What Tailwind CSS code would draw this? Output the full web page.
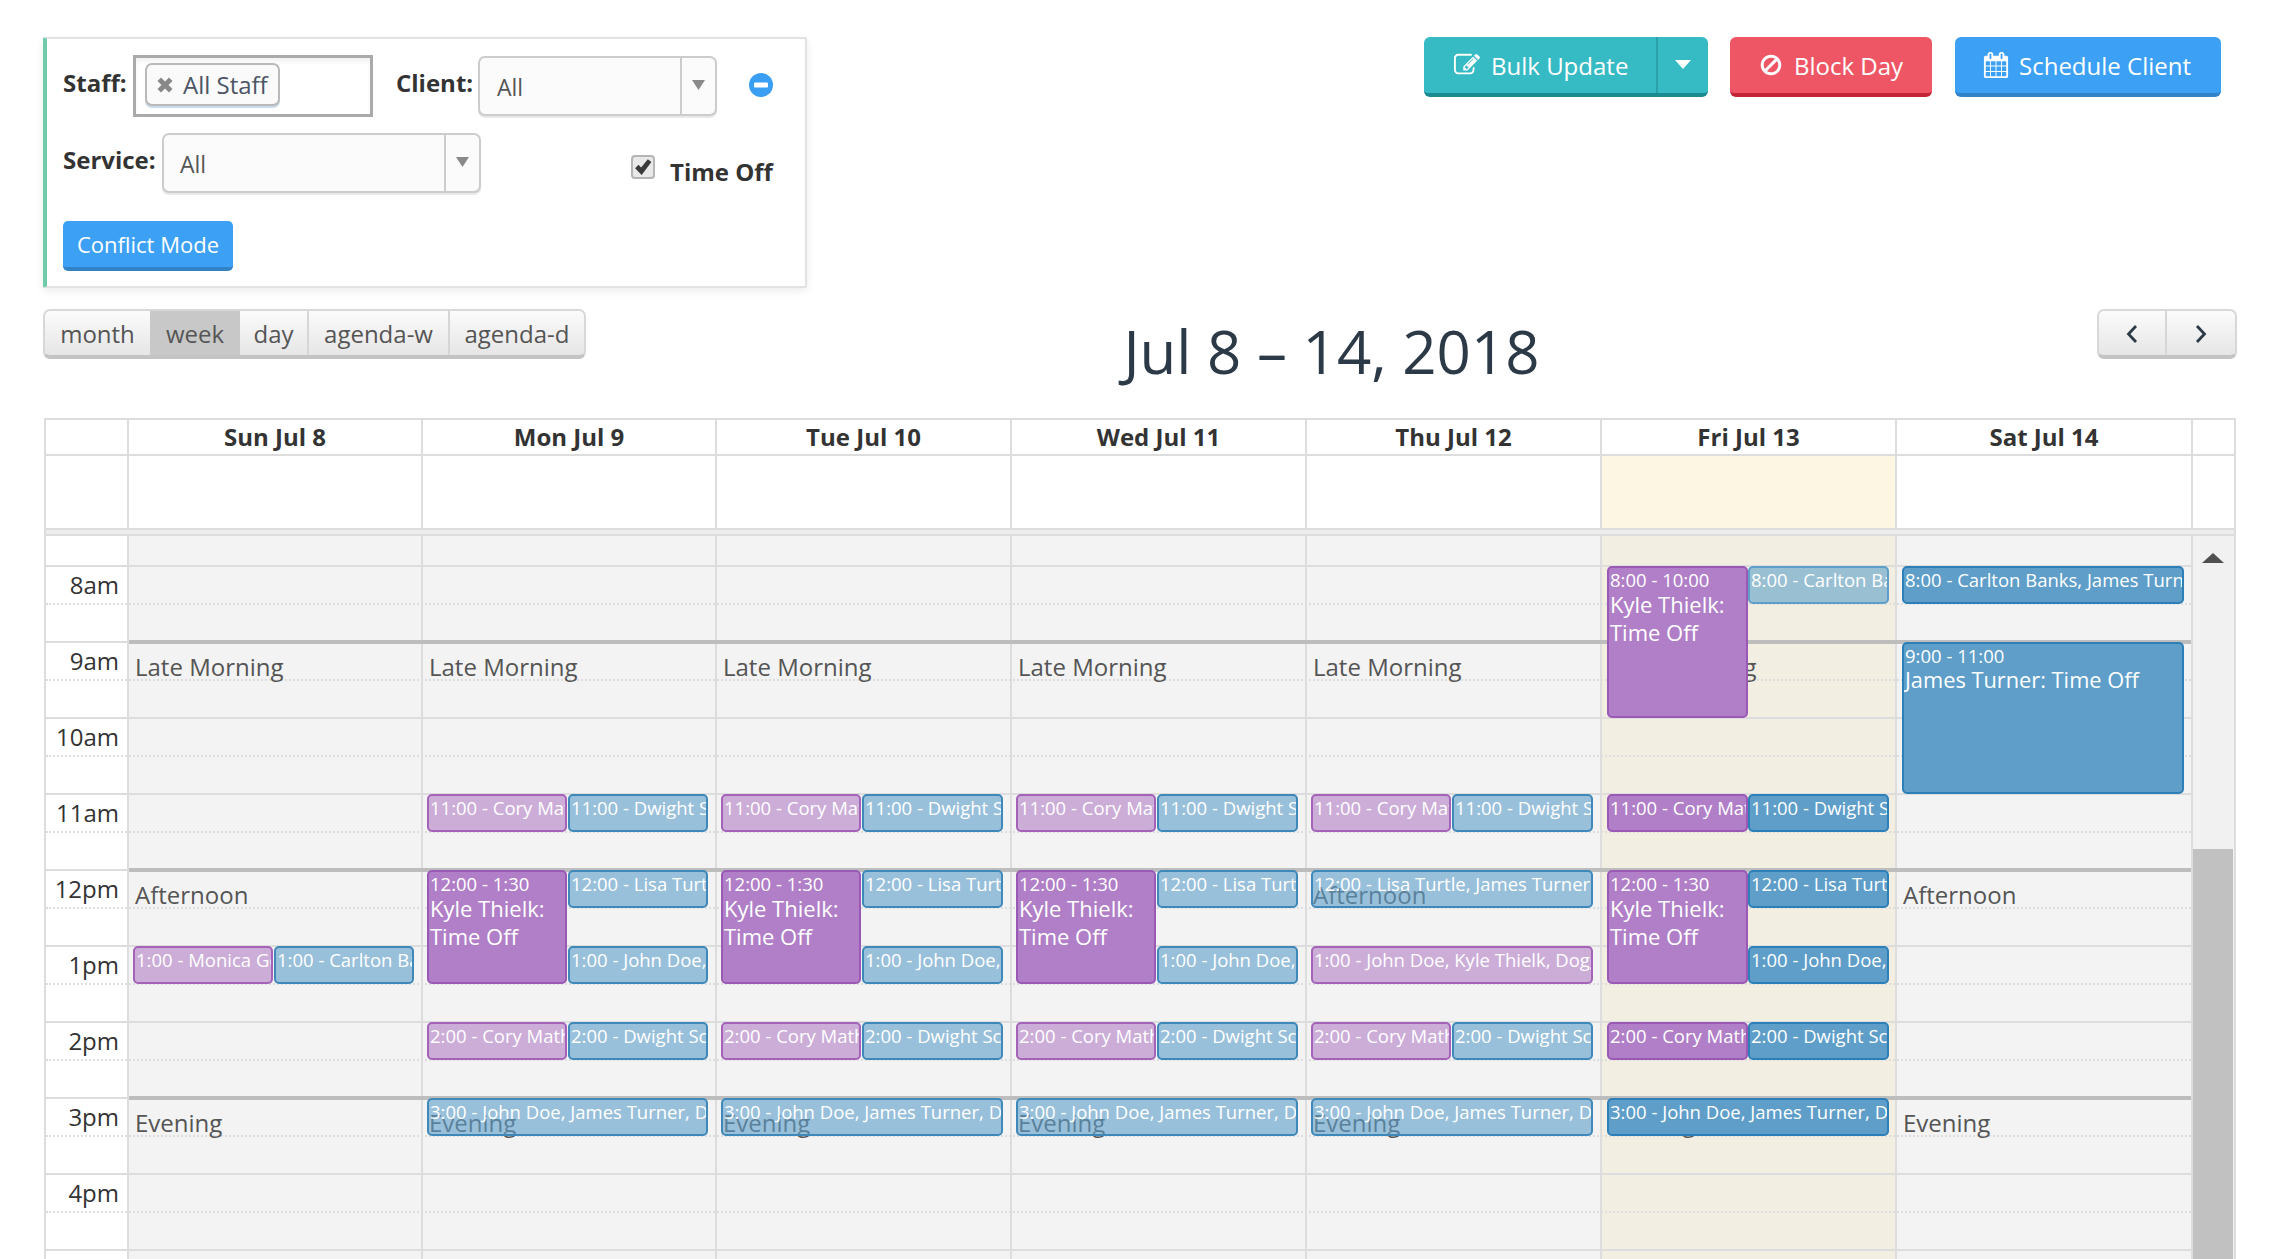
<!DOCTYPE html>
<html lang="en">
<head>
<meta charset="utf-8">
<title>Calendar</title>
<script src="https://cdn.jsdelivr.net/npm/@tailwindcss/browser@4"></script>
</head>
<body class="h-[1259px] w-[2271px] overflow-hidden bg-white font-['Open_Sans',sans-serif] text-[#333]">

<div class="flex items-start justify-between pl-[43px] pr-[50px] pt-[37px]">
  <div class="h-[251px] w-[764px] rounded-[2px] border-2 border-l-4 border-[#e2e2e2] border-l-[#6fcba8] bg-white pl-[16px] pt-[16px] shadow-[0_3px_8px_rgba(0,0,0,0.08)]">
    <div class="flex items-start">
      <span class="mt-[10px] w-[70px] text-[24px] leading-[36px] font-bold">Staff:</span>
      <div class="flex h-[62px] w-[240px] items-start border-[3px] border-[#aaa] bg-white pl-[9px] pt-[5px] shadow-[inset_0_4px_4px_rgba(0,0,0,0.05)]">
        <div class="flex h-[43px] w-[135px] items-center rounded-[7px] border-2 border-[#b9b9b9] bg-[#fafafa] pl-[10px] shadow-[0_2px_0_#c9dbe8]">
          <svg class="mr-[10px] h-[16px] w-[16px]" viewBox="0 0 16 16"><path d="M4 0.500 8 4.500 12 0.500 15.500 4 11.500 8 15.500 12 12 15.500 8 11.500 4 15.500 0.500 12 4.500 8 0.500 4Z" fill="#888"/></svg>
          <span class="text-[24px] leading-[30px] text-[#4b5565]">All Staff</span>
        </div>
      </div>
      <span class="ml-[23px] mt-[10px] w-[82px] text-[24px] leading-[36px] font-bold">Client:</span>
      <div class="mt-[1px] flex h-[60px] w-[239px] rounded-[7px] border-2 border-[#ccc] bg-[#fbfbfb] shadow-[0_2px_0_#e8e8e8]">
        <span class="flex-1 pl-[17px] pt-[11px] text-[23px] leading-[36px] text-[#555]">All</span>
        <span class="flex w-[35px] justify-center border-l-2 border-[#ccc] pt-[22px]">
          <svg class="h-[10px] w-[13px]" viewBox="0 0 13 10"><path d="M0 0H13L6.500 10Z" fill="#8a8a8a"/></svg>
        </span>
      </div>
      <svg class="ml-[32px] mt-[18px] h-[24px] w-[24px]" viewBox="0 0 24 24"><circle cx="12" cy="12" r="12" fill="#3a9ff2"/><rect x="5" y="9.500" width="14" height="5" rx="1" fill="#fff"/></svg>
    </div>
    <div class="mt-[16px] flex items-start">
      <span class="mt-[9px] w-[99px] text-[24px] leading-[36px] font-bold">Service:</span>
      <div class="flex h-[60px] w-[319px] rounded-[7px] border-2 border-[#ccc] bg-[#fbfbfb] shadow-[0_2px_0_#e8e8e8]">
        <span class="flex-1 pl-[16px] pt-[11px] text-[23px] leading-[36px] text-[#555]">All</span>
        <span class="flex w-[35px] justify-center border-l-2 border-[#ccc] pt-[22px]">
          <svg class="h-[10px] w-[13px]" viewBox="0 0 13 10"><path d="M0 0H13L6.500 10Z" fill="#8a8a8a"/></svg>
        </span>
      </div>
      <div class="ml-[150px] mt-[22px] flex h-[24px] w-[24px] items-center justify-center rounded-[4px] border-2 border-[#b5b5b5] bg-[#e9e9e9]">
        <svg class="h-[18px] w-[18px]" viewBox="0 0 16 16"><path d="M1 9 4 6 6.300 8.500 12.300 1 15.500 3.500 6.800 15Z" fill="#3a3a3a"/></svg>
      </div>
      <span class="ml-[15px] mt-[21px] text-[24px] leading-[36px] font-bold">Time Off</span>
    </div>
    <button class="mt-[28px] block h-[50px] w-[170px] rounded-[5px] border-b-4 border-[#3283c5] bg-[#3ca1f5] text-[22px] leading-[46px] text-white">Conflict Mode</button>
  </div>

  <div class="flex gap-[22px]">
    <div class="flex h-[60px] w-[284px] rounded-[6px] border-b-4 border-[#1b8b92] bg-[#36bac4] text-white">
      <div class="flex w-[232px] items-center pl-[30px]">
        <svg class="mr-[11px] h-[26px] w-[26px]" viewBox="0 0 1792 1792"><path fill="#fff" d="M888 1184l116-116-152-152-116 116v56h96v96h56zm440-720q-16-16-33 1l-350 350q-17 17-1 33t33-1l350-350q17-17 1-33zm80 594v190q0 119-84.500 203.500t-203.500 84.500h-832q-119 0-203.500-84.500t-84.500-203.500v-832q0-119 84.500-203.500t203.500-84.500h832q63 0 117 25 15 7 18 23 3 17-9 29l-49 49q-14 14-32 8-23-6-45-6h-832q-66 0-113 47t-47 113v832q0 66 47 113t113 47h832q66 0 113-47t47-113v-126q0-13 9-22l64-64q15-15 35-7t20 29zm-96-738l288 288-672 672h-288v-288zm444 132l-92 92-288-288 92-92q28-28 68-28t68 28l152 152q28 28 28 68t-28 68z"/></svg>
        <span class="mt-[2px] text-[24px] leading-[30px]">Bulk Update</span>
      </div>
      <div class="flex flex-1 items-center justify-center border-l-2 border-[#2aa0a9]">
        <svg class="mb-[2px] h-[9px] w-[16px]" viewBox="0 0 16 9"><path d="M0 0H16L8 9Z" fill="#fff"/></svg>
      </div>
    </div>
    <div class="flex h-[60px] w-[202px] items-center rounded-[6px] border-b-4 border-[#c42436] bg-[#ef5665] pl-[29px] text-white">
      <svg class="mr-[11px] h-[24px] w-[24px]" viewBox="0 0 1792 1792"><path fill="#fff" d="M1440 893q0-161-87-295l-754 753q137 89 297 89 111 0 211.500-43.500t173.500-116.500 116-174.500 43-212.500zm-999 299l755-754q-135-91-300-91-148 0-273 73t-198 199-73 274q0 162 89 299zm1223-299q0 157-61 300t-163.500 246-245 164-298.500 61-298.500-61-245-164-163.500-246-61-300 61-299.500 163.500-245.500 245-164 298.500-61 298.500 61 245 164 163.500 245.500 61 299.500z"/></svg>
      <span class="mt-[2px] text-[24px] leading-[30px]">Block Day</span>
    </div>
    <div class="ml-[1px] flex h-[60px] w-[266px] items-center rounded-[6px] border-b-4 border-[#3283c5] bg-[#3ca1f5] pl-[28px] text-white">
      <svg class="mr-[10px] h-[26px] w-[26px]" viewBox="0 0 1792 1792"><path fill="#fff" d="M192 1664h288v-288h-288v288zm352 0h320v-288h-320v288zm-352-352h288v-320h-288v320zm352 0h320v-320h-320v320zm-352-384h288v-288h-288v288zm736 736h320v-288h-320v288zm-384-736h320v-288h-320v288zm768 736h288v-288h-288v288zm-384-352h320v-320h-320v320zm-352-864v-288q0-13-9.500-22.500t-22.500-9.500h-64q-13 0-22.500 9.500t-9.500 22.500v288q0 13 9.500 22.500t22.500 9.500h64q13 0 22.500-9.500t9.500-22.500zm736 864h288v-320h-288v320zm-384-384h320v-288h-320v288zm384 0h288v-288h-288v288zm32-480v-288q0-13-9.500-22.500t-22.500-9.500h-64q-13 0-22.500 9.500t-9.500 22.500v288q0 13 9.500 22.500t22.500 9.500h64q13 0 22.500-9.500t9.500-22.500zm384-64v1280q0 52-38 90t-90 38h-1408q-52 0-90-38t-38-90v-1280q0-52 38-90t90-38h128v-96q0-66 47-113t113-47h64q66 0 113 47t47 113v96h384v-96q0-66 47-113t113-47h64q66 0 113 47t47 113v96h128q52 0 90 38t38 90z"/></svg>
      <span class="mt-[2px] text-[24px] leading-[30px]">Schedule Client</span>
    </div>
  </div>
</div>

<div class="mt-[21px] flex h-[109px] items-start pl-[43px] pr-[34px]">
  <div class="flex h-[50px] w-[543px] overflow-hidden rounded-[7px] border-2 border-b-4 border-[#d8d8d8] border-b-[#c4c4c4] bg-gradient-to-b from-[#fbfbfb] to-[#e6e6e6] text-[24px] leading-[46px] text-[#555]">
    <span class="w-[105px] text-center">month</span>
    <span class="w-[90px] bg-[#c8c8c8] text-center">week</span>
    <span class="w-[69px] border-r-2 border-[#d6d6d6] text-center">day</span>
    <span class="w-[141px] border-r-2 border-[#d6d6d6] text-center">agenda-w</span>
    <span class="flex-1 text-center">agenda-d</span>
  </div>
  <h2 class="mt-[10px] flex-1 pr-[20px] text-center text-[60px] leading-[64px] font-normal text-[#2c3a47]">Jul 8 – 14, 2018</h2>
  <div class="flex h-[50px] w-[140px] rounded-[7px] border-2 border-b-4 border-[#d8d8d8] border-b-[#c4c4c4] bg-gradient-to-b from-[#fbfbfb] to-[#e6e6e6]">
    <span class="flex w-[68px] items-center justify-center border-r-2 border-[#d6d6d6] pt-[1px]">
      <svg class="h-[20px] w-[14px]" viewBox="0 0 14 20"><path d="M11 2 3.500 10 11 18" fill="none" stroke="#2c3a47" stroke-width="2.800"/></svg>
    </span>
    <span class="flex flex-1 items-center justify-center pt-[1px]">
      <svg class="h-[20px] w-[14px]" viewBox="0 0 14 20"><path d="M3 2 10.500 10 3 18" fill="none" stroke="#2c3a47" stroke-width="2.800"/></svg>
    </span>
  </div>
</div>

<div class="ml-[44px] w-[2192px] border-x-2 border-t-2 border-[#ddd]">
  <div class="grid h-[36px] grid-cols-[81px_294px_294px_295px_295px_295px_295px_296px_43px] border-b-2 border-[#ddd] text-center text-[24px] leading-[34px] font-bold text-[#333]">
    <div></div>
    <div class="border-l-2 border-[#ddd]">Sun Jul 8</div>
    <div class="border-l-2 border-[#ddd]">Mon Jul 9</div>
    <div class="border-l-2 border-[#ddd]">Tue Jul 10</div>
    <div class="border-l-2 border-[#ddd]">Wed Jul 11</div>
    <div class="border-l-2 border-[#ddd]">Thu Jul 12</div>
    <div class="border-l-2 border-[#ddd]">Fri Jul 13</div>
    <div class="border-l-2 border-[#ddd]">Sat Jul 14</div>
    <div class="border-l-2 border-[#ddd]"></div>
  </div>
  <div class="grid h-[74px] grid-cols-[81px_294px_294px_295px_295px_295px_295px_296px_43px] border-b-2 border-[#ddd]">
    <div></div>
    <div class="border-l-2 border-[#ddd]"></div>
    <div class="border-l-2 border-[#ddd]"></div>
    <div class="border-l-2 border-[#ddd]"></div>
    <div class="border-l-2 border-[#ddd]"></div>
    <div class="border-l-2 border-[#ddd]"></div>
    <div class="border-l-2 border-[#ddd] bg-[#fdf6e3]"></div>
    <div class="border-l-2 border-[#ddd]"></div>
    <div class="border-l-2 border-[#ddd]"></div>
  </div>
  <div class="h-[6px] border-b-2 border-[#ddd] bg-[#ededed]"></div>

  <div class="relative h-[723px] overflow-hidden">
    <div class="absolute inset-0 grid grid-cols-[81px_294px_294px_295px_295px_295px_295px_296px_43px]">
      <div class="bg-white"></div>
      <div class="border-l-2 border-[#ddd] bg-[#f3f3f3]"></div>
      <div class="border-l-2 border-[#ddd] bg-[#f3f3f3]"></div>
      <div class="border-l-2 border-[#ddd] bg-[#f3f3f3]"></div>
      <div class="border-l-2 border-[#ddd] bg-[#f3f3f3]"></div>
      <div class="border-l-2 border-[#ddd] bg-[#f3f3f3]"></div>
      <div class="border-l-2 border-[#ddd] bg-[#f2efe2]"></div>
      <div class="border-l-2 border-[#ddd] bg-[#f3f3f3]"></div>
      <div class="border-l-2 border-[#ddd] bg-[#f1f1f1]">
        <svg class="ml-[9px] mt-[17px] h-[10px] w-[22px]" viewBox="0 0 22 10"><path d="M11 0 22 10H0Z" fill="#505050"/></svg>
        <div class="ml-[0px] mt-[286px] h-[500px] w-[40px] bg-[#c1c1c1]"></div>
      </div>
    </div>

    <div class="relative w-[2145px] text-right text-[24px] leading-[36px] text-[#333]">
      <div class="h-[29px]"></div>
      <div class="h-[38px] border-t-2 border-[#ddd]"><div class="w-[73px]">8am</div></div>
      <div class="h-[38px] border-t-2 border-dotted border-[#ddd]"></div>
      <div class="h-[38px] border-t-2 border-[#ddd]"><div class="w-[73px]">9am</div></div>
      <div class="h-[38px] border-t-2 border-dotted border-[#ddd]"></div>
      <div class="h-[38px] border-t-2 border-[#ddd]"><div class="w-[73px]">10am</div></div>
      <div class="h-[38px] border-t-2 border-dotted border-[#ddd]"></div>
      <div class="h-[38px] border-t-2 border-[#ddd]"><div class="w-[73px]">11am</div></div>
      <div class="h-[38px] border-t-2 border-dotted border-[#ddd]"></div>
      <div class="h-[38px] border-t-2 border-[#ddd]"><div class="w-[73px]">12pm</div></div>
      <div class="h-[38px] border-t-2 border-dotted border-[#ddd]"></div>
      <div class="h-[38px] border-t-2 border-[#ddd]"><div class="w-[73px]">1pm</div></div>
      <div class="h-[38px] border-t-2 border-dotted border-[#ddd]"></div>
      <div class="h-[38px] border-t-2 border-[#ddd]"><div class="w-[73px]">2pm</div></div>
      <div class="h-[38px] border-t-2 border-dotted border-[#ddd]"></div>
      <div class="h-[38px] border-t-2 border-[#ddd]"><div class="w-[73px]">3pm</div></div>
      <div class="h-[38px] border-t-2 border-dotted border-[#ddd]"></div>
      <div class="h-[38px] border-t-2 border-[#ddd]"><div class="w-[73px]">4pm</div></div>
      <div class="h-[38px] border-t-2 border-dotted border-[#ddd]"></div>
      <div class="h-[38px] border-t-2 border-[#ddd]"></div>
    </div>

    <div class="absolute left-[83px] top-[104px] h-[4px] w-[2062px] bg-[#bdbdbd]"></div>
    <div class="absolute left-[83px] top-[332px] h-[4px] w-[2062px] bg-[#bdbdbd]"></div>
    <div class="absolute left-[83px] top-[560px] h-[4px] w-[2062px] bg-[#bdbdbd]"></div>

    <div class="absolute inset-0 grid grid-cols-[81px_294px_294px_295px_295px_295px_295px_296px_43px] text-[18.5px] leading-[22px] text-white">
      <div></div>

      <!-- Sun -->
      <div class="relative border-l-2 border-transparent">
        <span class="absolute left-[6px] top-[115px] text-[24px] leading-[32px] text-[#555]">Late Morning</span>
        <span class="absolute left-[6px] top-[343px] text-[24px] leading-[32px] text-[#555]">Afternoon</span>
        <span class="absolute left-[6px] top-[571px] text-[24px] leading-[32px] text-[#555]">Evening</span>
        <div class="absolute left-[4px] top-[410px] h-[38px] w-[140px] overflow-hidden whitespace-nowrap rounded-[5px] border-2 border-[#a463b8] bg-[#b07fc7]/60 px-[1px] pt-[1px]">1:00 - Monica Geller</div>
        <div class="absolute left-[145px] top-[410px] h-[38px] w-[140px] overflow-hidden whitespace-nowrap rounded-[5px] border-2 border-[#3f88ba] bg-[#5e9ec9]/60 px-[1px] pt-[1px]">1:00 - Carlton Banks</div>
      </div>

      <!-- Mon -->
      <div class="relative border-l-2 border-transparent">
        <span class="absolute left-[6px] top-[115px] text-[24px] leading-[32px] text-[#555]">Late Morning</span>
        <span class="absolute left-[6px] top-[343px] text-[24px] leading-[32px] text-[#555]">Afternoon</span>
        <span class="absolute left-[6px] top-[571px] text-[24px] leading-[32px] text-[#555]">Evening</span>
        <div class="absolute left-[4px] top-[258px] h-[38px] w-[140px] overflow-hidden whitespace-nowrap rounded-[5px] border-2 border-[#a463b8] bg-[#b07fc7]/60 px-[1px] pt-[1px]">11:00 - Cory Mathews</div>
        <div class="absolute left-[145px] top-[258px] h-[38px] w-[140px] overflow-hidden whitespace-nowrap rounded-[5px] border-2 border-[#3f88ba] bg-[#5e9ec9]/60 px-[1px] pt-[1px]">11:00 - Dwight Schrute</div>
        <div class="absolute left-[4px] top-[334px] h-[114px] w-[140px] overflow-hidden rounded-[5px] border-2 border-[#9b59b6] bg-[#b07fc7] px-[1px] pt-[1px]"><div>12:00 - 1:30</div><div class="-mt-[1px] text-[22px] leading-[28px]">Kyle Thielk: Time Off</div></div>
        <div class="absolute left-[145px] top-[334px] h-[38px] w-[140px] overflow-hidden whitespace-nowrap rounded-[5px] border-2 border-[#3f88ba] bg-[#5e9ec9]/60 px-[1px] pt-[1px]">12:00 - Lisa Turtle</div>
        <div class="absolute left-[145px] top-[410px] h-[38px] w-[140px] overflow-hidden whitespace-nowrap rounded-[5px] border-2 border-[#3f88ba] bg-[#5e9ec9]/60 px-[1px] pt-[1px]">1:00 - John Doe, James</div>
        <div class="absolute left-[4px] top-[486px] h-[38px] w-[140px] overflow-hidden whitespace-nowrap rounded-[5px] border-2 border-[#a463b8] bg-[#b07fc7]/60 px-[1px] pt-[1px]">2:00 - Cory Mathews</div>
        <div class="absolute left-[145px] top-[486px] h-[38px] w-[140px] overflow-hidden whitespace-nowrap rounded-[5px] border-2 border-[#3f88ba] bg-[#5e9ec9]/60 px-[1px] pt-[1px]">2:00 - Dwight Schrute</div>
        <div class="absolute left-[4px] top-[562px] h-[38px] w-[281px] overflow-hidden whitespace-nowrap rounded-[5px] border-2 border-[#3f88ba] bg-[#5e9ec9]/60 px-[1px] pt-[1px]">3:00 - John Doe, James Turner, Dwight Schrute</div>
      </div>

      <!-- Tue -->
      <div class="relative border-l-2 border-transparent">
        <span class="absolute left-[6px] top-[115px] text-[24px] leading-[32px] text-[#555]">Late Morning</span>
        <span class="absolute left-[6px] top-[343px] text-[24px] leading-[32px] text-[#555]">Afternoon</span>
        <span class="absolute left-[6px] top-[571px] text-[24px] leading-[32px] text-[#555]">Evening</span>
        <div class="absolute left-[4px] top-[258px] h-[38px] w-[140px] overflow-hidden whitespace-nowrap rounded-[5px] border-2 border-[#a463b8] bg-[#b07fc7]/60 px-[1px] pt-[1px]">11:00 - Cory Mathews</div>
        <div class="absolute left-[145px] top-[258px] h-[38px] w-[141px] overflow-hidden whitespace-nowrap rounded-[5px] border-2 border-[#3f88ba] bg-[#5e9ec9]/60 px-[1px] pt-[1px]">11:00 - Dwight Schrute</div>
        <div class="absolute left-[4px] top-[334px] h-[114px] w-[140px] overflow-hidden rounded-[5px] border-2 border-[#9b59b6] bg-[#b07fc7] px-[1px] pt-[1px]"><div>12:00 - 1:30</div><div class="-mt-[1px] text-[22px] leading-[28px]">Kyle Thielk: Time Off</div></div>
        <div class="absolute left-[145px] top-[334px] h-[38px] w-[141px] overflow-hidden whitespace-nowrap rounded-[5px] border-2 border-[#3f88ba] bg-[#5e9ec9]/60 px-[1px] pt-[1px]">12:00 - Lisa Turtle</div>
        <div class="absolute left-[145px] top-[410px] h-[38px] w-[141px] overflow-hidden whitespace-nowrap rounded-[5px] border-2 border-[#3f88ba] bg-[#5e9ec9]/60 px-[1px] pt-[1px]">1:00 - John Doe, James</div>
        <div class="absolute left-[4px] top-[486px] h-[38px] w-[140px] overflow-hidden whitespace-nowrap rounded-[5px] border-2 border-[#a463b8] bg-[#b07fc7]/60 px-[1px] pt-[1px]">2:00 - Cory Mathews</div>
        <div class="absolute left-[145px] top-[486px] h-[38px] w-[141px] overflow-hidden whitespace-nowrap rounded-[5px] border-2 border-[#3f88ba] bg-[#5e9ec9]/60 px-[1px] pt-[1px]">2:00 - Dwight Schrute</div>
        <div class="absolute left-[4px] top-[562px] h-[38px] w-[282px] overflow-hidden whitespace-nowrap rounded-[5px] border-2 border-[#3f88ba] bg-[#5e9ec9]/60 px-[1px] pt-[1px]">3:00 - John Doe, James Turner, Dwight Schrute</div>
      </div>

      <!-- Wed -->
      <div class="relative border-l-2 border-transparent">
        <span class="absolute left-[6px] top-[115px] text-[24px] leading-[32px] text-[#555]">Late Morning</span>
        <span class="absolute left-[6px] top-[343px] text-[24px] leading-[32px] text-[#555]">Afternoon</span>
        <span class="absolute left-[6px] top-[571px] text-[24px] leading-[32px] text-[#555]">Evening</span>
        <div class="absolute left-[4px] top-[258px] h-[38px] w-[140px] overflow-hidden whitespace-nowrap rounded-[5px] border-2 border-[#a463b8] bg-[#b07fc7]/60 px-[1px] pt-[1px]">11:00 - Cory Mathews</div>
        <div class="absolute left-[145px] top-[258px] h-[38px] w-[141px] overflow-hidden whitespace-nowrap rounded-[5px] border-2 border-[#3f88ba] bg-[#5e9ec9]/60 px-[1px] pt-[1px]">11:00 - Dwight Schrute</div>
        <div class="absolute left-[4px] top-[334px] h-[114px] w-[140px] overflow-hidden rounded-[5px] border-2 border-[#9b59b6] bg-[#b07fc7] px-[1px] pt-[1px]"><div>12:00 - 1:30</div><div class="-mt-[1px] text-[22px] leading-[28px]">Kyle Thielk: Time Off</div></div>
        <div class="absolute left-[145px] top-[334px] h-[38px] w-[141px] overflow-hidden whitespace-nowrap rounded-[5px] border-2 border-[#3f88ba] bg-[#5e9ec9]/60 px-[1px] pt-[1px]">12:00 - Lisa Turtle</div>
        <div class="absolute left-[145px] top-[410px] h-[38px] w-[141px] overflow-hidden whitespace-nowrap rounded-[5px] border-2 border-[#3f88ba] bg-[#5e9ec9]/60 px-[1px] pt-[1px]">1:00 - John Doe, James</div>
        <div class="absolute left-[4px] top-[486px] h-[38px] w-[140px] overflow-hidden whitespace-nowrap rounded-[5px] border-2 border-[#a463b8] bg-[#b07fc7]/60 px-[1px] pt-[1px]">2:00 - Cory Mathews</div>
        <div class="absolute left-[145px] top-[486px] h-[38px] w-[141px] overflow-hidden whitespace-nowrap rounded-[5px] border-2 border-[#3f88ba] bg-[#5e9ec9]/60 px-[1px] pt-[1px]">2:00 - Dwight Schrute</div>
        <div class="absolute left-[4px] top-[562px] h-[38px] w-[282px] overflow-hidden whitespace-nowrap rounded-[5px] border-2 border-[#3f88ba] bg-[#5e9ec9]/60 px-[1px] pt-[1px]">3:00 - John Doe, James Turner, Dwight Schrute</div>
      </div>

      <!-- Thu -->
      <div class="relative border-l-2 border-transparent">
        <span class="absolute left-[6px] top-[115px] text-[24px] leading-[32px] text-[#555]">Late Morning</span>
        <span class="absolute left-[6px] top-[343px] text-[24px] leading-[32px] text-[#555]">Afternoon</span>
        <span class="absolute left-[6px] top-[571px] text-[24px] leading-[32px] text-[#555]">Evening</span>
        <div class="absolute left-[4px] top-[258px] h-[38px] w-[140px] overflow-hidden whitespace-nowrap rounded-[5px] border-2 border-[#a463b8] bg-[#b07fc7]/60 px-[1px] pt-[1px]">11:00 - Cory Mathews</div>
        <div class="absolute left-[145px] top-[258px] h-[38px] w-[141px] overflow-hidden whitespace-nowrap rounded-[5px] border-2 border-[#3f88ba] bg-[#5e9ec9]/60 px-[1px] pt-[1px]">11:00 - Dwight Schrute</div>
        <div class="absolute left-[4px] top-[334px] h-[38px] w-[282px] overflow-hidden whitespace-nowrap rounded-[5px] border-2 border-[#3f88ba] bg-[#5e9ec9]/60 px-[1px] pt-[1px]">12:00 - Lisa Turtle, James Turner</div>
        <div class="absolute left-[4px] top-[410px] h-[38px] w-[282px] overflow-hidden whitespace-nowrap rounded-[5px] border-2 border-[#a463b8] bg-[#b07fc7]/60 px-[1px] pt-[1px]">1:00 - John Doe, Kyle Thielk, Doggett</div>
        <div class="absolute left-[4px] top-[486px] h-[38px] w-[140px] overflow-hidden whitespace-nowrap rounded-[5px] border-2 border-[#a463b8] bg-[#b07fc7]/60 px-[1px] pt-[1px]">2:00 - Cory Mathews</div>
        <div class="absolute left-[145px] top-[486px] h-[38px] w-[141px] overflow-hidden whitespace-nowrap rounded-[5px] border-2 border-[#3f88ba] bg-[#5e9ec9]/60 px-[1px] pt-[1px]">2:00 - Dwight Schrute</div>
        <div class="absolute left-[4px] top-[562px] h-[38px] w-[282px] overflow-hidden whitespace-nowrap rounded-[5px] border-2 border-[#3f88ba] bg-[#5e9ec9]/60 px-[1px] pt-[1px]">3:00 - John Doe, James Turner, Dwight Schrute</div>
      </div>

      <!-- Fri -->
      <div class="relative border-l-2 border-transparent">
        <span class="absolute left-[6px] top-[115px] text-[24px] leading-[32px] text-[#555]">Late Morning</span>
        <span class="absolute left-[6px] top-[343px] text-[24px] leading-[32px] text-[#555]">Afternoon</span>
        <span class="absolute left-[6px] top-[571px] text-[24px] leading-[32px] text-[#555]">Evening</span>
        <div class="absolute left-[5px] top-[30px] h-[152px] w-[141px] overflow-hidden rounded-[5px] border-2 border-[#9b59b6] bg-[#b07fc7] px-[1px] pt-[1px]"><div>8:00 - 10:00</div><div class="-mt-[1px] text-[22px] leading-[28px]">Kyle Thielk: Time Off</div></div>
        <div class="absolute left-[146px] top-[30px] h-[38px] w-[141px] overflow-hidden whitespace-nowrap rounded-[5px] border-2 border-[#5e9ec9] bg-[#5e9ec9]/60 px-[1px] pt-[1px]">8:00 - Carlton Banks</div>
        <div class="absolute left-[5px] top-[258px] h-[38px] w-[141px] overflow-hidden whitespace-nowrap rounded-[5px] border-2 border-[#9b59b6] bg-[#b07fc7] px-[1px] pt-[1px]">11:00 - Cory Mathews</div>
        <div class="absolute left-[146px] top-[258px] h-[38px] w-[141px] overflow-hidden whitespace-nowrap rounded-[5px] border-2 border-[#2d7fb8] bg-[#5e9ec9] px-[1px] pt-[1px]">11:00 - Dwight Schrute</div>
        <div class="absolute left-[5px] top-[334px] h-[114px] w-[141px] overflow-hidden rounded-[5px] border-2 border-[#9b59b6] bg-[#b07fc7] px-[1px] pt-[1px]"><div>12:00 - 1:30</div><div class="-mt-[1px] text-[22px] leading-[28px]">Kyle Thielk: Time Off</div></div>
        <div class="absolute left-[146px] top-[334px] h-[38px] w-[141px] overflow-hidden whitespace-nowrap rounded-[5px] border-2 border-[#2d7fb8] bg-[#5e9ec9] px-[1px] pt-[1px]">12:00 - Lisa Turtle</div>
        <div class="absolute left-[146px] top-[410px] h-[38px] w-[141px] overflow-hidden whitespace-nowrap rounded-[5px] border-2 border-[#2d7fb8] bg-[#5e9ec9] px-[1px] pt-[1px]">1:00 - John Doe, James</div>
        <div class="absolute left-[5px] top-[486px] h-[38px] w-[141px] overflow-hidden whitespace-nowrap rounded-[5px] border-2 border-[#9b59b6] bg-[#b07fc7] px-[1px] pt-[1px]">2:00 - Cory Mathews</div>
        <div class="absolute left-[146px] top-[486px] h-[38px] w-[141px] overflow-hidden whitespace-nowrap rounded-[5px] border-2 border-[#2d7fb8] bg-[#5e9ec9] px-[1px] pt-[1px]">2:00 - Dwight Schrute</div>
        <div class="absolute left-[5px] top-[562px] h-[38px] w-[282px] overflow-hidden whitespace-nowrap rounded-[5px] border-2 border-[#2d7fb8] bg-[#5e9ec9] px-[1px] pt-[1px]">3:00 - John Doe, James Turner, Dwight Schrute</div>
      </div>

      <!-- Sat -->
      <div class="relative border-l-2 border-transparent">
        <span class="absolute left-[6px] top-[115px] text-[24px] leading-[32px] text-[#555]">Late Morning</span>
        <span class="absolute left-[6px] top-[343px] text-[24px] leading-[32px] text-[#555]">Afternoon</span>
        <span class="absolute left-[6px] top-[571px] text-[24px] leading-[32px] text-[#555]">Evening</span>
        <div class="absolute left-[5px] top-[30px] h-[38px] w-[282px] overflow-hidden whitespace-nowrap rounded-[5px] border-2 border-[#2d7fb8] bg-[#5e9ec9] px-[1px] pt-[1px]">8:00 - Carlton Banks, James Turner</div>
        <div class="absolute left-[5px] top-[106px] h-[152px] w-[282px] overflow-hidden rounded-[5px] border-2 border-[#2d7fb8] bg-[#5e9ec9] px-[1px] pt-[1px]"><div>9:00 - 11:00</div><div class="-mt-[1px] text-[21.8px] leading-[28px]">James Turner: Time Off</div></div>
      </div>
      <div></div>
    </div>
  </div>
</div>
</body>
</html>
